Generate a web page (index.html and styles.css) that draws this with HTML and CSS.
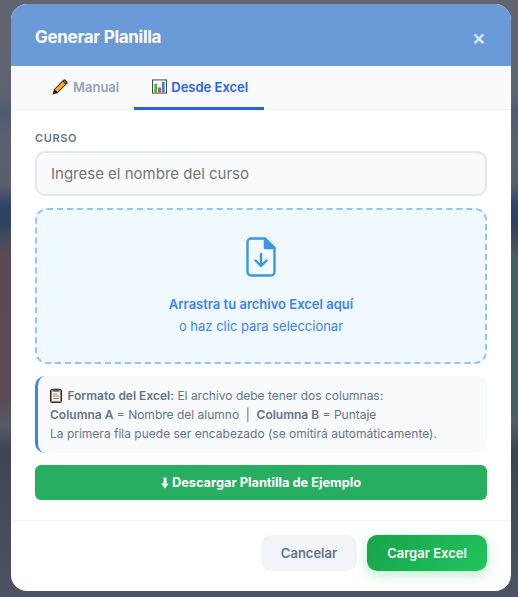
FILE: index.html
```html
<!DOCTYPE html>
<html lang="es">
<head>
    <meta charset="UTF-8">
    <meta name="viewport" content="width=device-width, initial-scale=1.0">
    <title>Generar Planilla</title>
    <link rel="stylesheet" href="styles.css">
</head>
<body>
    <div class="overlay">
        <div class="modal">
            <div class="modal-header">
                <h2>Generar Planilla</h2>
                <span class="close">&times;</span>
            </div>

            <div class="tabs">
                <div class="tab">
                    <svg class="tab-icon pencil" viewBox="0 0 16 16">
                        <path d="M0.600 15.400 1.800 10.400 11.400 0.800a1.500 1.500 0 0 1 2.100 0l1.700 1.700a1.500 1.500 0 0 1 0 2.100L5.600 14.200z" fill="#222"/>
                        <path d="M2.900 10.600 10.800 2.700l2.500 2.500-7.900 7.900z" fill="#f7b500"/>
                        <path d="M11.500 2l1-.4 1.900 1.900-.4 1z" fill="#e8743b"/>
                    </svg>
                    <span>Manual</span>
                </div>
                <div class="tab active">
                    <svg class="tab-icon" viewBox="0 0 16 16">
                        <rect x="0.500" y="1" width="15" height="14" fill="#fff" stroke="#3a3a3a"/>
                        <rect x="2.500" y="5" width="3" height="9.500" fill="#2dbb4e"/>
                        <rect x="6.500" y="9" width="3" height="5.500" fill="#e8452c"/>
                        <rect x="10.500" y="3" width="3" height="11.500" fill="#2f86e0"/>
                    </svg>
                    <span>Desde Excel</span>
                </div>
            </div>

            <div class="modal-body">
                <label class="field-label" for="curso">Curso</label>
                <input class="field-input" id="curso" type="text" placeholder="Ingrese el nombre del curso">

                <div class="dropzone">
                    <svg class="drop-icon" viewBox="0 0 30 40" fill="none" stroke="#3b97df" stroke-width="2.4" stroke-linecap="round" stroke-linejoin="round">
                        <path d="M19 1.500H5A3.500 3.500 0 0 0 1.500 5v30A3.500 3.500 0 0 0 5 38.500h20a3.500 3.500 0 0 0 3.500-3.500V11z"/>
                        <path d="M19 1.500V11h9.500z" fill="#3b97df"/>
                        <path d="M15 17v12M9.500 23.500 15 29l5.500-5.500"/>
                    </svg>
                    <div class="drop-title">Arrastra tu archivo Excel aquí</div>
                    <div class="drop-sub">o haz clic para seleccionar</div>
                </div>

                <div class="info-box">
                    <div>
                        <svg class="clip-icon" viewBox="0 0 12 15">
                            <rect x="0.500" y="1.500" width="11" height="13" rx="1" fill="#a5765a" stroke="#3d2f28"/>
                            <rect x="2" y="3.500" width="8" height="9.500" fill="#f4f1ec"/>
                            <rect x="3.500" y="0.500" width="5" height="3" fill="#555"/>
                            <path d="M3 6h4M3 8h6M3 10.500h6" stroke="#8a8f96" stroke-width="1"/>
                        </svg>
                        <b>Formato del Excel:</b> El archivo debe tener dos columnas:
                    </div>
                    <div><b>Columna A</b> = Nombre del alumno &nbsp;|&nbsp; <b>Columna B</b> = Puntaje</div>
                    <div>La primera fila puede ser encabezado (se omitirá automáticamente).</div>
                </div>

                <button class="download-btn">
                    <svg class="arrow-icon" viewBox="0 0 8 12">
                        <path d="M2.500 0.500h3V6.500H7.800L4 11.500 0.200 6.500H2.500z" fill="#fff"/>
                    </svg>
                    Descargar Plantilla de Ejemplo
                </button>
            </div>

            <div class="modal-footer">
                <button class="btn btn-cancel">Cancelar</button>
                <button class="btn btn-submit">Cargar Excel</button>
            </div>
        </div>
    </div>
</body>
</html>
```
FILE: styles.css
```css
* {
    box-sizing: border-box;
}

html, body {
    margin: 0;
    height: 100%;
    overflow: hidden;
}

body {
    font-family: Inter, "Liberation Sans", sans-serif;
}

/* blurred page behind the modal: only the edges show */
.overlay {
    height: 597px;
    padding: 4px 7px 0 11px;
    background-color: #5f6472;
    background-image:
        linear-gradient(180deg, #62656f 0, #5e6370 95px, #4f5a70 112px, #5b6070 135px, #5a5f6e 185px, #2f4468 205px, #2f4262 222px, #4a4c58 245px, #5a4a55 255px, #5a4b56 400px, #565a68 425px, #3f4453 450px, #4d5363 597px),
        linear-gradient(180deg, #62656f 0, #5e6370 95px, #4f5a70 112px, #5b6070 135px, #5a5f6e 185px, #2f4468 205px, #2f4262 222px, #4a4c58 245px, #446060 255px, #44605f 405px, #565a68 425px, #3f4453 450px, #4d5363 597px);
    background-size: 50% 100%, 50% 100%;
    background-position: left top, right top;
    background-repeat: no-repeat;
}

.modal {
    height: 587px;
    background: #fff;
    border-radius: 16px;
    overflow: hidden;
    display: flex;
    flex-direction: column;
}

.modal-header {
    height: 62px;
    flex-shrink: 0;
    padding: 4px 24px 0;
    background: #6a9ad8;
    color: #fff;
    display: flex;
    align-items: center;
    justify-content: space-between;
}

.modal-header h2 {
    margin: 0 0 1px;
    font-size: 17px;
    font-weight: 700;
    letter-spacing: -0.3px;
}

.close {
    margin: 1px 1px 0 0;
    font-size: 21px;
    line-height: 1;
    font-weight: 600;
    color: rgba(255, 255, 255, 0.75);
}

.tabs {
    height: 44px;
    flex-shrink: 0;
    padding: 0 24px;
    background: #f8fafc;
    border-bottom: 1px solid #f1f5f9;
    display: flex;
}

.tab {
    height: 44px;
    padding: 0 15px 0 17px;
    display: flex;
    align-items: center;
    gap: 5px;
    font-size: 13px;
    font-weight: 600;
    color: #94a3b8;
    border-bottom: 3px solid transparent;
}

.tab.active {
    padding: 0 16px 0 18px;
    gap: 4px;
    color: #2563eb;
    border-bottom-color: #2563eb;
}

.tab-icon {
    width: 15px;
    height: 15px;
}

.tab-icon.pencil {
    width: 16px;
    height: 16px;
}

.modal-body {
    flex: 1;
    padding: 20px 24px 0;
}

.field-label {
    display: block;
    margin-bottom: 5px;
    font-size: 11px;
    line-height: 16px;
    font-weight: 600;
    letter-spacing: 0.6px;
    text-transform: uppercase;
    color: #64748b;
}

.field-input {
    display: block;
    width: 100%;
    height: 45px;
    padding: 0 14px;
    font-family: inherit;
    font-size: 15px;
    background: #f8fafc;
    border: 2px solid #e2e8f0;
    border-radius: 10px;
}

.field-input::placeholder {
    color: #757575;
}

.dropzone {
    height: 156px;
    margin-top: 12px;
    padding-top: 27px;
    background: #f0f9ff;
    border: 2px dashed #93c5fd;
    border-radius: 12px;
    display: flex;
    flex-direction: column;
    align-items: center;
}

.drop-icon {
    width: 30px;
    height: 40px;
}

.drop-title {
    margin-top: 18px;
    font-size: 13px;
    line-height: 18px;
    font-weight: 600;
    color: #3b82f6;
}

.drop-sub {
    margin-top: 4px;
    font-size: 13px;
    line-height: 18px;
    color: #3b82f6;
}

.info-box {
    height: 77px;
    margin-top: 12px;
    padding: 10px 12px;
    background: #f8fafc;
    border-left: 3px solid #3b82f6;
    border-radius: 10px;
    font-size: 12px;
    line-height: 19px;
    color: #64748b;
}

.info-box b {
    font-weight: 600;
}

.clip-icon {
    width: 12px;
    height: 15px;
    margin-right: 2px;
    vertical-align: -3px;
}

.download-btn {
    width: 100%;
    height: 35px;
    margin-top: 12px;
    display: flex;
    align-items: center;
    justify-content: center;
    gap: 3px;
    font-family: inherit;
    font-size: 12.800px;
    font-weight: 700;
    color: #fff;
    background: #27ae60;
    border: none;
    border-radius: 6px;
}

.arrow-icon {
    width: 8px;
    height: 12px;
}

.modal-footer {
    height: 71px;
    flex-shrink: 0;
    padding: 14px 24px 0;
    border-top: 1px solid #f1f5f9;
    display: flex;
    justify-content: flex-end;
    gap: 10px;
}

.btn {
    height: 36px;
    border: none;
    border-radius: 10px;
    font-family: inherit;
    font-size: 13px;
    font-weight: 600;
}

.btn-cancel {
    width: 96px;
    color: #64748b;
    background: #f1f5f9;
}

.btn-submit {
    width: 120px;
    color: #fff;
    background: linear-gradient(135deg, #16a34a, #22c55e);
    box-shadow: 0 4px 14px rgba(34, 197, 94, 0.3);
}
```
